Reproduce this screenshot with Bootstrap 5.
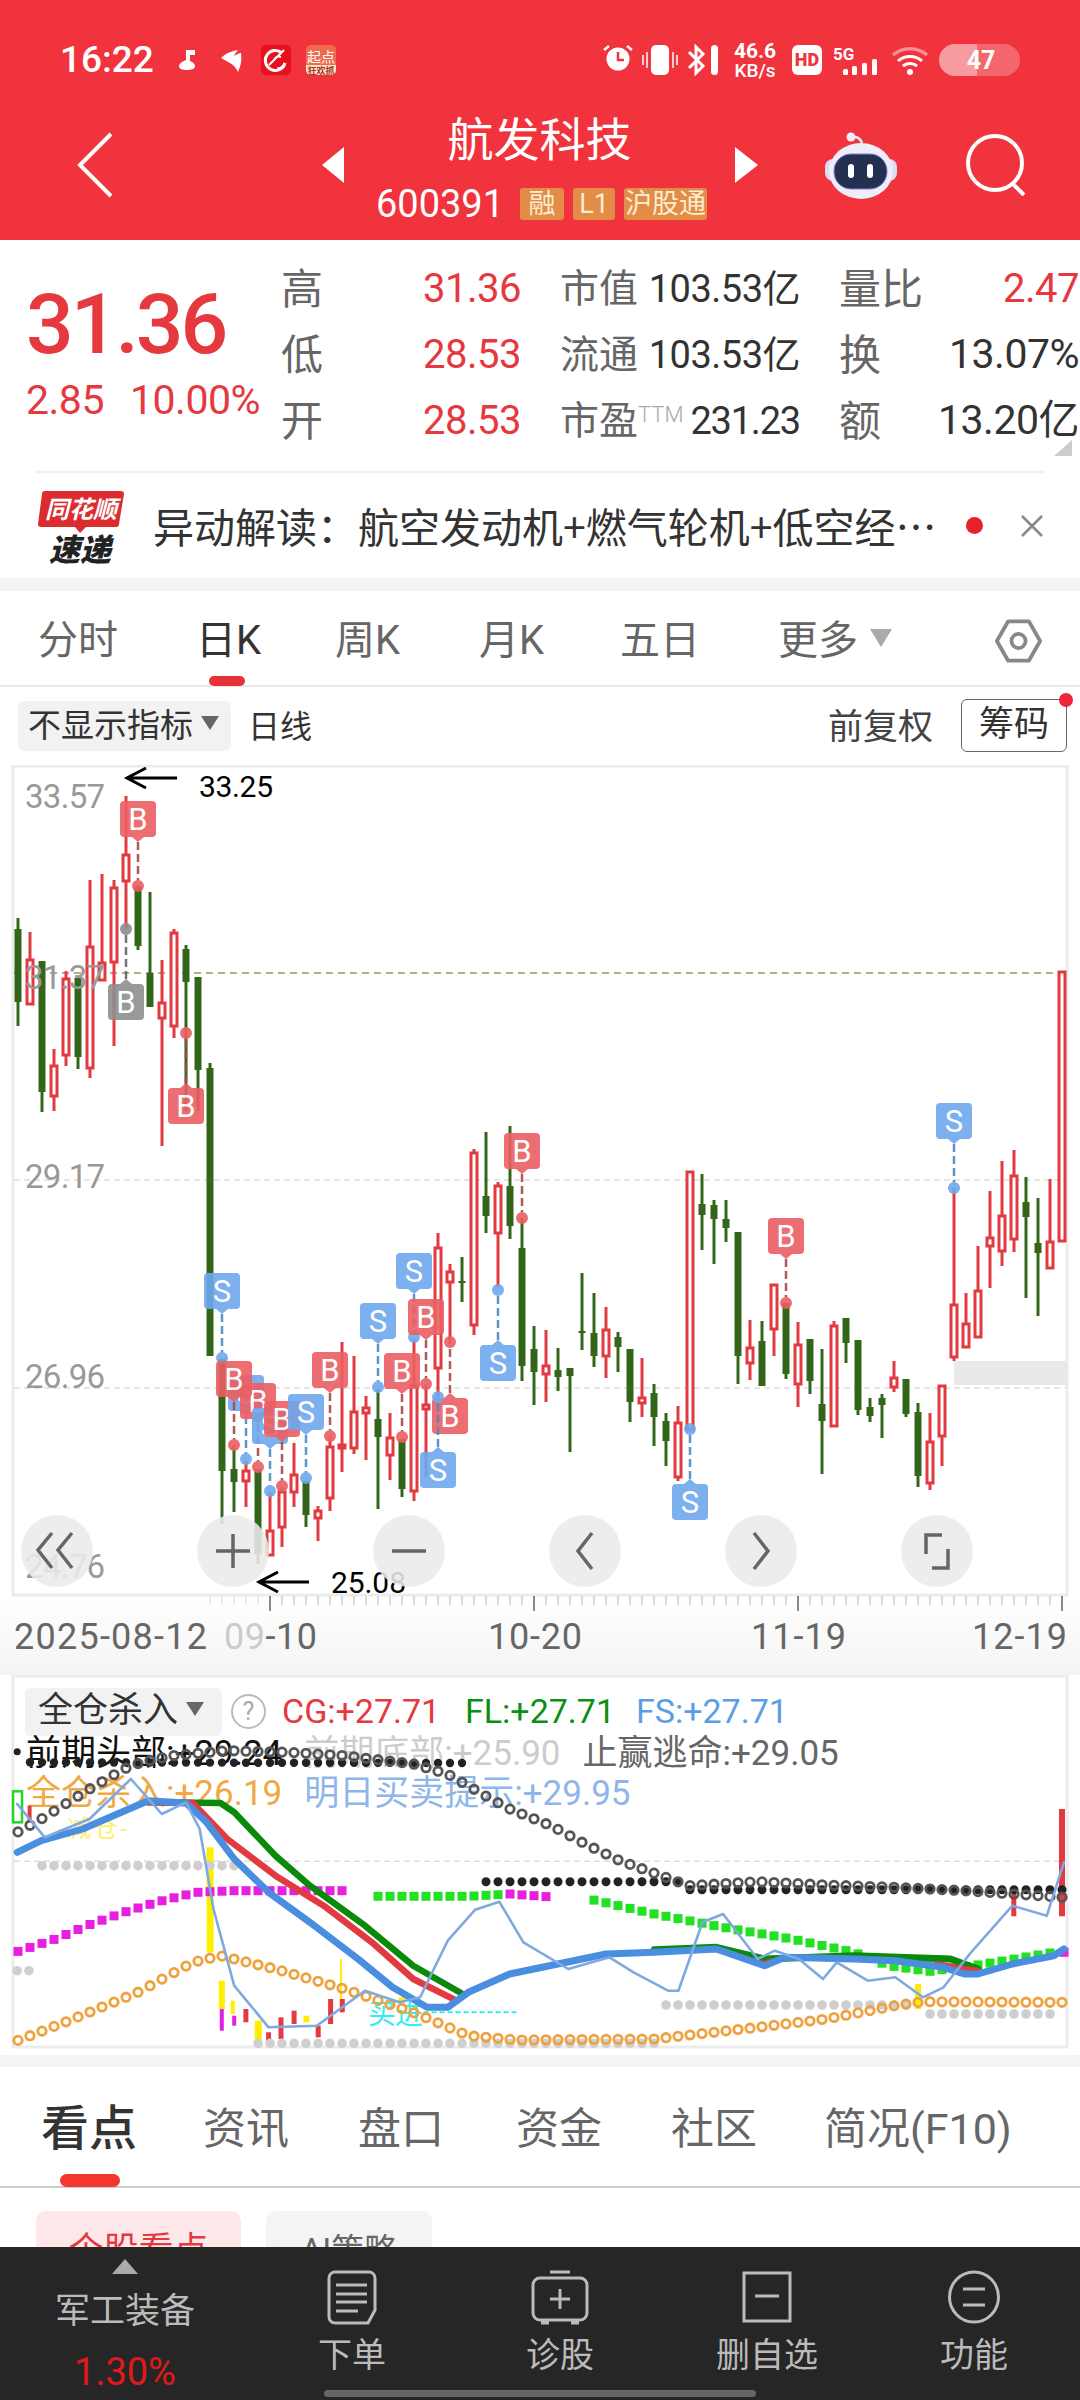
<!DOCTYPE html>
<html lang="zh-CN">
<head>
  <meta charset="UTF-8">
  <meta name="viewport" content="width=device-width, initial-scale=1.0">
  <title>航发科技</title>
  <link href="https://cdn.jsdelivr.net/npm/bootstrap@5.3.3/dist/css/bootstrap.min.css" rel="stylesheet">
  <script src="https://cdn.jsdelivr.net/npm/bootstrap@5.3.3/dist/js/bootstrap.bundle.min.js"></script>
  <style>
    body { width: 1080px; height: 2400px; overflow: hidden; background: #fff; color: #333;
      font-family: Roboto, "Noto Sans CJK SC", sans-serif; }
    .app-main { height: 2247px; overflow: hidden; }
    .app-head { height: 240px; background: #f0333d; color: #fff; }
    .status-row { height: 90px; padding: 30px 0 0 60px; }
    .status-time { font-size: 37px; font-weight: 500; width: 110px; }
    .status-right { margin-left: 260px; }
    .nav-row { height: 150px; padding-left: 77px; }
    .nav-prev { margin-left: 209px; }
    .nav-mid { width: 391px; }
    .nav-title { font-size: 46px; line-height: 70px; margin-top: 15px; height: 70px; }
    .nav-sub { margin-top: 13px; height: 32px; margin-left: 4px; }
    .nav-code { font-size: 38px; line-height: 32px; margin-right: 16px; }
    .nav-tag { background: #e28c48; color: #fbeecf; font-size: 27px; line-height: 32px; height: 32px; width: 44px; text-align: center; border-radius: 3px; margin-right: 9px; white-space: nowrap; }
    .nav-tag-l1 { width: 42px; }
    .nav-tag:last-child { margin-right: 0; width: 83px; }
    .robot-mark { margin: 0 69px 0 66px; }

    .quote-main { height: 231px; }
    .quote-left { width: 281px; padding: 43px 0 0 26px; color: #e5383f; }
    .quote-price { font-size: 84px; line-height: 84px; font-weight: 500; letter-spacing: -3px; }
    .quote-sub { font-size: 41px; line-height: 44px; margin-top: 11px; letter-spacing: -.5px; width: 234px; }
    .quote-grid { display: grid; grid-template-columns: 240px 240px 240px; column-gap: 39px; grid-auto-rows: 66px; padding-top: 16px; }
    .quote-cell { display: flex; justify-content: space-between; align-items: center; white-space: nowrap; }
    .quote-lab { font-size: 39px; color: #666; }
    .quote-big { font-size: 42px; }
    .quote-lab sup { font-size: 22px; color: #aaa; top: -.55em; font-weight: 300; }
    .quote-val { font-size: 38px; color: #333; letter-spacing: -.5px; }
    .quote-wide { font-size: 41px; }
    .quote-tight { letter-spacing: -1.2px; }
    .quote-up { color: #e5383f; font-size: 40px; }
    .corner-mark { position: absolute; left: 1054px; top: 440px; }

    .news-row { height: 107px; border-top: 2px solid #f0f0f0; margin: 0 36px; }
    .news-logo { margin: 0 25px 0 2px; }
    .news-text { font-size: 41px; color: #333; white-space: nowrap; width: 813px; font-family: "Noto Sans CJK SC", sans-serif; }
    .news-dot { width: 17px; height: 17px; background: #e8202c; border-radius: 50%; }
    .news-close { margin-left: 38px; }
    .gray-band { height: 13px; background: #f4f4f4; }
    .gray-band-low { height: 12px; }

    .kline-tabs { display: grid; grid-template-columns: 158px 139px 144px 141px 158px 217px 47px; height: 96px; padding: 5px 0 0 38px; border-bottom: 2px solid #e8e8e8; }
    .kline-tab { font-size: 40px; color: #666; position: relative; display: flex; align-items: center; white-space: nowrap; }
    .kline-on { color: #333; }
    .kline-on::after { content: ""; position: absolute; left: 13px; bottom: -1px; width: 36px; height: 10px; background: #e8323a; border-radius: 5px; }
    .tab-caret { width: 0; height: 0; border-left: 11px solid transparent; border-right: 11px solid transparent; border-top: 18px solid #aaa; margin: 0 0 6px 12px; }

    .tool-row { height: 78px; padding: 14px 13px 0 18px; }
    .tool-pill { background: #f2f2f2; border-radius: 6px; height: 50px; width: 213px; padding-left: 10px; font-size: 33px; color: #333; white-space: nowrap; }
    .tool-caret { width: 0; height: 0; border-left: 9px solid transparent; border-right: 9px solid transparent; border-top: 14px solid #666; margin: 0 0 6px 8px; }
    .tool-day { font-size: 32px; margin-left: 17px; color: #333; height: 52px; }
    .tool-adj { font-size: 35px; color: #444; margin-right: 28px; line-height: 54px; }
    .tool-btn { width: 106px; height: 53px; margin-top: -2px; border: 1.5px solid #666; border-radius: 6px; font-size: 35px; color: #333; position: relative; text-align: center; line-height: 50px; }
    .tool-dot { position: absolute; right: -7px; top: -7px; width: 14px; height: 14px; background: #f0243a; border-radius: 50%; }

    .chart-box { height: 910px; }
    .chart-svg { display: block; }
    .ind-box { height: 380px; position: relative; }
    .ind-svg { position: absolute; left: 0; top: 0; }
    .ind-top { padding: 11px 0 0 25px; }
    .ind-pill { width: 197px; height: 48px; background: #f2f2f2; border-radius: 6px; font-size: 35px; padding-left: 13px; color: #333; white-space: nowrap; }
    .ind-help { width: 35px; height: 35px; border: 2px solid #bbb; border-radius: 50%; color: #aaa; font-size: 25px; text-align: center; line-height: 31px; margin: 0 16px 0 9px; }
    .ind-leg { font-size: 34px; white-space: nowrap; }
    .leg-cg { width: 183px; color: #e5383f; }
    .leg-fl { width: 171px; color: #0a8f12; }
    .leg-fs { color: #5b9de6; }
    .ind-line { font-size: 35px; line-height: 40px; padding-left: 26px; white-space: nowrap; }
    .ind-up { margin-top: -3px; }
    .ind-line span { margin-right: 22px; }
    .leg-a { color: #111; }
    .leg-b { color: #ccc; }
    .leg-c { color: #666; }
    .leg-d { color: #f0a844; }
    .leg-e { color: #8fb6ea; }

    .info-tabs { height: 121px; display: grid; grid-template-columns: 162px 155px 158px 155px 153px 256px; padding: 5px 0 0 41px; border-bottom: 2px solid #ccc; }
    .info-tab { font-size: 43px; color: #666; position: relative; white-space: nowrap; display: flex; align-items: center; }
    .info-on { font-size: 48px; color: #333; font-weight: 500; }
    .info-on::after { content: ""; position: absolute; left: 19px; bottom: -1px; width: 60px; height: 13px; background: #f5362f; border-radius: 7px; }
    .chip-row { padding: 23px 0 0 36px; gap: 25px; }
    .info-chip { height: 80px; border-radius: 10px; display: flex; align-items: center; justify-content: center; font-size: 35px; }
    .chip-on { width: 205px; background: #fde7e9; color: #e5383f; }
    .chip-off { width: 166px; background: #f4f4f4; color: #666; font-size: 33px; }

    .bottom-bar { height: 153px; background: #262626; color: #bbb; display: grid; grid-template-columns: 250px 204px 212px 202px 212px; position: relative; }
    .bar-first { padding-top: 12px; }
    .bar-tri { width: 0; height: 0; border-left: 13px solid transparent; border-right: 13px solid transparent; border-bottom: 15px solid #aaa; }
    .bar-name { font-size: 35px; line-height: 44px; margin-top: 16px; white-space: nowrap; }
    .bar-pct { font-size: 38px; line-height: 44px; margin-top: 16px; color: #e01a1a; }
    .bar-item { padding-top: 23px; }
    .bar-lab { font-size: 34px; line-height: 44px; margin-top: 8px; white-space: nowrap; }
    .home-bar { position: absolute; left: 324px; top: 143px; width: 432px; height: 7px; background: #666; border-radius: 4px; }
  </style>
</head>
<body>
<div class="app-main">
  <div class="app-head">
    <div class="status-row d-flex align-items-center">
      <div class="status-time">16:22</div>
      <svg width="170" height="40" viewBox="170 40 170 40">
        <path d="M186 50h9v5h-5v6c3 1 5 3 5 5 0 3-4 4-8 4s-8-1-8-4c0-2 2-4 5-5l2-1z" fill="#fff"/>
        <path d="M221 58c5-5 11-7 17-8-2 2-3 4-4 6 4-2 5-3 7-3 1 7 0 12-3 19-2-4-4-7-8-9-3-2-6-3-9-5z" fill="#fff"/>
        <rect x="261" y="45" width="30" height="30" rx="5" fill="#e8101c"/>
        <path d="M282 53a10 10 0 1 0 3 10c-1 3-4 6-8 6" fill="none" stroke="#fff" stroke-width="3"/>
        <path d="M269 65l15-15M274 60c1-3 4-4 7-3" fill="none" stroke="#fff" stroke-width="2"/>
        <rect x="306" y="45" width="30" height="30" rx="5" fill="#ee6b4f"/>
        <path d="M306 65h30v5a5 5 0 0 1-5 5h-20a5 5 0 0 1-5-5z" fill="#fbe3c4"/>
        <text x="321" y="62" font-size="14" fill="#fff" text-anchor="middle">起点</text>
        <text x="321" y="74" font-size="9" fill="#a5352b" text-anchor="middle" font-weight="700">狂欢抓</text>
      </svg>
      <svg class="status-right" width="425" height="40" viewBox="600 40 425 40">
        <circle cx="618" cy="59" r="11.5" fill="#fff"/>
        <path d="M618 52v8h6" fill="none" stroke="#f0333d" stroke-width="2.5"/>
        <path d="M604 50l5-4M632 50l-5-4" stroke="#fff" stroke-width="2.5"/>
        <rect x="651" y="45" width="18" height="30" rx="5" fill="#fff"/>
        <path d="M643 55v10M647 52v16M673 52v16M677 55v10" stroke="#fff" stroke-width="1.5"/>
        <path d="M689 52l14 14-7 7V47l7 7-14 14" fill="none" stroke="#fff" stroke-width="3"/>
        <rect x="711" y="45" width="7" height="30" rx="3.5" fill="#fff"/>
        <text x="755" y="58" font-size="21" font-weight="700" fill="#fff" text-anchor="middle">46.6</text>
        <text x="755" y="77" font-size="19" font-weight="500" fill="#fff" text-anchor="middle">KB/s</text>
        <rect x="792" y="45" width="30" height="30" rx="6" fill="#fff"/>
        <text x="807" y="66" font-size="18" font-weight="900" fill="#f0333d" text-anchor="middle">HD</text>
        <text x="833" y="60" font-size="17" font-weight="700" fill="#fff">5G</text>
        <rect x="843" y="69" width="5" height="6" rx="1.5" fill="#fff"/>
        <rect x="852" y="66" width="5" height="9" rx="1.5" fill="#fff"/>
        <rect x="862" y="63" width="5" height="12" rx="1.5" fill="#fff"/>
        <rect x="872" y="59" width="5" height="16" rx="1.5" fill="#fff"/>
        <path d="M893 55a26 26 0 0 1 34 0" fill="none" stroke="#fff" stroke-opacity=".45" stroke-width="3.5"/>
        <path d="M898 61a18 18 0 0 1 24 0M903 66a11 11 0 0 1 14 0" fill="none" stroke="#fff" stroke-width="3"/>
        <circle cx="910" cy="72" r="3" fill="#fff"/>
        <rect x="939" y="44" width="81" height="32" rx="16" fill="#fff" fill-opacity=".25"/>
        <path d="M955 44h22v32h-22a16 16 0 0 1 0-32z" fill="#fff" fill-opacity=".35"/>
        <text x="981" y="69" font-size="25" font-weight="700" fill="#fff" text-anchor="middle">47</text>
      </svg>
    </div>
    <div class="nav-row d-flex align-items-center">
      <svg width="36" height="66" viewBox="0 0 36 66" fill="none" stroke="#fff" stroke-width="4"><path d="M34 2L3 33l31 31"/></svg>
      <svg class="nav-prev" width="22" height="36" viewBox="0 0 22 36"><path d="M22 0v36L0 18z" fill="#fff"/></svg>
      <div class="nav-mid d-flex flex-column align-items-center align-self-start">
        <div class="nav-title">航发科技</div>
        <div class="nav-sub d-flex">
          <div class="nav-code">600391</div>
          <div class="nav-tag">融</div>
          <div class="nav-tag nav-tag-l1">L1</div>
          <div class="nav-tag">沪股通</div>
        </div>
      </div>
      <svg width="23" height="36" viewBox="0 0 23 36"><path d="M0 0v36l23-18z" fill="#fff"/></svg>
      <svg class="robot-mark" width="73" height="68" viewBox="824 130 73 68">
        <path d="M851 137c4-2 9-1 11 5" fill="none" stroke="#e8e6f4" stroke-width="2.5"/>
        <circle cx="851" cy="136" r="4.5" fill="#f0eef8"/>
        <rect x="825" y="158" width="72" height="22" rx="8" fill="#dcdcf2"/>
        <ellipse cx="861" cy="170" rx="32" ry="28" fill="#eeeef9"/>
        <rect x="834" y="153" width="53" height="35" rx="17" fill="#23304f" stroke="#8a7ad8" stroke-width="1"/>
        <rect x="848" y="163" width="6" height="14" rx="3" fill="#fff"/>
        <rect x="867" y="163" width="6" height="14" rx="3" fill="#fff"/>
      </svg>
      <svg width="60" height="62" viewBox="966 136 60 62" fill="none" stroke="#fff" stroke-width="4"><circle cx="995" cy="165" r="27"/><path d="M1013 186l11 11"/></svg>
    </div>
  </div>

  <div class="quote-main d-flex">
    <div class="quote-left">
      <div class="quote-price">31.36</div>
      <div class="quote-sub d-flex justify-content-between"><span>2.85</span><span>10.00%</span></div>
    </div>
    <div class="quote-grid">
      <div class="quote-cell"><span class="quote-lab quote-big">高</span><span class="quote-val quote-up">31.36</span></div>
      <div class="quote-cell"><span class="quote-lab">市值</span><span class="quote-val">103.53亿</span></div>
      <div class="quote-cell"><span class="quote-lab quote-big">量比</span><span class="quote-val quote-up">2.47</span></div>
      <div class="quote-cell"><span class="quote-lab quote-big">低</span><span class="quote-val quote-up">28.53</span></div>
      <div class="quote-cell"><span class="quote-lab">流通</span><span class="quote-val">103.53亿</span></div>
      <div class="quote-cell"><span class="quote-lab quote-big">换</span><span class="quote-val quote-wide">13.07%</span></div>
      <div class="quote-cell"><span class="quote-lab quote-big">开</span><span class="quote-val quote-up">28.53</span></div>
      <div class="quote-cell"><span class="quote-lab">市盈<sup>TTM</sup></span><span class="quote-val quote-tight">231.23</span></div>
      <div class="quote-cell"><span class="quote-lab quote-big">额</span><span class="quote-val quote-wide">13.20亿</span></div>
    </div>
    <svg class="corner-mark" width="18" height="16" viewBox="0 0 18 16"><path d="M18 0v16H0z" fill="#ccc"/></svg>
  </div>
  <div class="news-row d-flex align-items-center">
    <svg class="news-logo" width="90" height="76" viewBox="38 486 90 76">
      <path d="M45 489h76a3 3 0 0 1 3 3l-5 30a3 3 0 0 1-3 3H86l-6 6-5-6H41a3 3 0 0 1-3-3l4-30a3 3 0 0 1 3-3z" fill="#dd2c30"/>
      <text x="81" y="516" font-size="24" font-weight="700" font-style="italic" fill="#fff" text-anchor="middle">同花顺</text>
      <text x="80" y="559" font-size="31" font-weight="900" font-style="italic" fill="#222" text-anchor="middle">速递</text>
    </svg>
    <div class="news-text">异动解读：航空发动机+燃气轮机+低空经…</div>
    <div class="news-dot"></div>
    <svg class="news-close" width="22" height="22" viewBox="0 0 22 22" stroke="#888" stroke-width="2.5"><path d="M1 1l20 20M21 1L1 21"/></svg>
  </div>
  <div class="gray-band"></div>

  <div class="kline-tabs">
    <div class="kline-tab">分时</div>
    <div class="kline-tab kline-on">日K</div>
    <div class="kline-tab">周K</div>
    <div class="kline-tab">月K</div>
    <div class="kline-tab">五日</div>
    <div class="kline-tab">更多<span class="tab-caret"></span></div>
    <div class="kline-tab"><svg width="50" height="48" viewBox="0 0 50 48" fill="none" stroke="#888" stroke-width="4"><path d="M14 3h22l12 21-12 21H14L2 24z" stroke-linejoin="round"/><circle cx="25" cy="24" r="7.5"/></svg></div>
  </div>
  <div class="tool-row d-flex align-items-start">
    <div class="tool-pill d-flex align-items-center">不显示指标<span class="tool-caret"></span></div>
    <div class="tool-day d-flex align-items-center">日线</div>
    <div class="tool-adj ms-auto">前复权</div>
    <div class="tool-btn">筹码<span class="tool-dot"></span></div>
  </div>

  <div class="chart-box"><svg id="priceChart" class="chart-svg" width="1080" height="910" viewBox="0 766 1080 910"></svg></div>

  <div class="ind-box">
    <div class="ind-top d-flex align-items-center">
      <div class="ind-pill d-flex align-items-center">全仓杀入<span class="tool-caret"></span></div>
      <div class="ind-help">?</div>
      <div class="ind-leg leg-cg">CG:+27.71</div>
      <div class="ind-leg leg-fl">FL:+27.71</div>
      <div class="ind-leg leg-fs">FS:+27.71</div>
    </div>
    <div class="ind-line ind-up"><span class="leg-a">前期头部:+29.24</span><span class="leg-b">前期底部:+25.90</span><span class="leg-c">止赢逃命:+29.05</span></div>
    <div class="ind-line"><span class="leg-d">全仓杀入:+26.19</span><span class="leg-e">明日买卖提示:+29.95</span></div>
    <svg id="indChart" class="ind-svg" width="1080" height="380" viewBox="0 1676 1080 380"></svg>
  </div>
  <div class="gray-band gray-band-low"></div>

  <div class="info-tabs">
    <div class="info-tab info-on">看点</div>
    <div class="info-tab">资讯</div>
    <div class="info-tab">盘口</div>
    <div class="info-tab">资金</div>
    <div class="info-tab">社区</div>
    <div class="info-tab">简况(F10)</div>
  </div>
  <div class="chip-row d-flex">
    <div class="info-chip chip-on">个股看点</div>
    <div class="info-chip chip-off">AI策略</div>
  </div>
</div>

<div class="bottom-bar">
  <div class="bar-first d-flex flex-column align-items-center">
    <div class="bar-tri"></div>
    <div class="bar-name">军工装备</div>
    <div class="bar-pct">1.30%</div>
  </div>
  <div class="bar-item d-flex flex-column align-items-center">
    <svg width="50" height="55" viewBox="0 0 50 55" fill="none" stroke="#bbb" stroke-width="3"><path d="M8 2h34a6 6 0 0 1 6 6v32l-7 13H8a6 6 0 0 1-6-6V8a6 6 0 0 1 6-6z"/><path d="M9 15h31M9 24h31M9 32h31M9 41h22"/></svg>
    <div class="bar-lab">下单</div>
  </div>
  <div class="bar-item d-flex flex-column align-items-center">
    <svg width="58" height="55" viewBox="0 0 58 55" fill="none" stroke="#bbb" stroke-width="3"><path d="M19 2h20M9 8h40a7 7 0 0 1 7 7v28a7 7 0 0 1-7 7H9a7 7 0 0 1-7-7V15a7 7 0 0 1 7-7z"/><path d="M29 19v20M19 29h20"/><path d="M10 52h8M40 52h8" stroke-width="5"/></svg>
    <div class="bar-lab">诊股</div>
  </div>
  <div class="bar-item d-flex flex-column align-items-center">
    <svg width="50" height="55" viewBox="0 0 50 55" fill="none" stroke="#bbb" stroke-width="3"><path d="M2 3h46v48H2z"/><path d="M13 26h24"/></svg>
    <div class="bar-lab">删自选</div>
  </div>
  <div class="bar-item d-flex flex-column align-items-center">
    <svg width="54" height="55" viewBox="0 0 54 55" fill="none" stroke="#bbb" stroke-width="3"><ellipse cx="27" cy="27" rx="24.5" ry="25"/><path d="M16 19h22M16 35h22"/></svg>
    <div class="bar-lab">功能</div>
  </div>
  <div class="home-bar"></div>
</div>

<script>
  'use strict';
  const RED = '#e23a40', GREEN = '#33661a';

  // r/g, wick top, body top, body bottom, wick bottom (x = 18 + 12 * index)
  const candles = [
    ['g',919,930,1003,1027],['r',933,961,1005,1006],['g',962,962,1093,1113],['r',1050,1067,1097,1112],
    ['r',972,980,1056,1067],['g',979,979,1058,1070],['r',881,948,1069,1079],['r',875,964,981,982],
    ['r',881,889,963,1047],['r',797,856,882,930],['g',887,887,947,951],['g',893,974,1008,1008],
    ['r',961,1004,1019,1147],['r',930,934,1027,1039],['g',946,950,983,1112],['g',978,978,1071,1112],
    ['g',1064,1069,1357,1357],['g',1360,1360,1472,1525],['g',1446,1470,1483,1513],['r',1462,1472,1482,1508],
    ['g',1470,1470,1555,1565],['r',1493,1532,1556,1556],['r',1488,1493,1528,1548],['r',1444,1476,1493,1508],
    ['g',1482,1482,1516,1528],['r',1507,1512,1519,1542],['r',1437,1448,1499,1512],['r',1343,1446,1449,1473],
    ['r',1357,1413,1449,1455],['r',1397,1409,1414,1461],['g',1390,1420,1438,1510],['r',1414,1439,1456,1481],
    ['g',1440,1440,1490,1498],['r',1340,1387,1492,1502],['r',1385,1406,1410,1477],['r',1234,1249,1369,1398],
    ['r',1265,1273,1283,1345],['g',1258,1282,1284,1303],['r',1150,1154,1326,1336],['g',1133,1197,1217,1234],
    ['r',1183,1187,1234,1288],['g',1127,1187,1227,1240],['g',1219,1249,1367,1382],['g',1327,1350,1373,1406],
    ['r',1331,1367,1375,1403],['g',1349,1371,1378,1392],['g',1369,1369,1377,1453],['g',1274,1332,1334,1351],
    ['g',1294,1334,1357,1368],['r',1308,1331,1357,1379],['g',1333,1338,1348,1373],['g',1350,1350,1403,1423],
    ['r',1359,1399,1404,1418],['g',1385,1394,1418,1447],['g',1414,1422,1442,1467],['r',1407,1424,1478,1482],
    ['r',1173,1173,1431,1431],['g',1175,1205,1216,1251],['g',1201,1206,1220,1265],['g',1201,1220,1229,1243],
    ['g',1233,1233,1357,1385],['r',1321,1349,1364,1381],['g',1322,1342,1387,1387],['r',1286,1286,1330,1357],
    ['g',1304,1304,1375,1380],['r',1323,1346,1385,1408],['g',1340,1340,1382,1395],['g',1350,1405,1422,1475],
    ['r',1322,1327,1427,1427],['g',1319,1319,1344,1364],['g',1341,1341,1411,1416],['g',1399,1408,1417,1423],
    ['g',1395,1399,1406,1439],['r',1362,1379,1388,1393],['g',1380,1380,1415,1418],['g',1404,1413,1477,1488],
    ['r',1414,1443,1484,1491],['r',1387,1387,1437,1467],['r',1189,1306,1358,1362],['r',1294,1325,1348,1348],
    ['r',1247,1292,1338,1338],['r',1192,1239,1247,1289],['r',1162,1217,1252,1267],['r',1151,1177,1240,1253],
    ['g',1178,1203,1218,1299],['g',1199,1244,1254,1317],['r',1180,1243,1269,1270],['r',973,973,1242,1242]
  ];

  // letter, x, badge top, dot y, points down (badge above the dot)
  const badges = [
    ['B',138,802,887,true],['G',126,985,930,false],['B',186,1089,1034,false],
    ['S',222,1274,1359,true],['S',246,1376,1460,true],['B',258,1384,1468,true],['S',270,1409,1492,true],
    ['B',282,1402,1487,true],['B',234,1362,1446,true],['S',306,1395,1479,true],['B',330,1353,1437,true],
    ['S',378,1304,1388,true],['B',402,1354,1438,true],['S',414,1254,1338,true],['B',426,1300,1385,true],
    ['B',450,1399,1343,false],['S',438,1453,1398,false],['S',498,1346,1291,false],['B',522,1134,1219,true],
    ['S',690,1485,1430,false],['B',786,1219,1304,true],['S',954,1104,1189,true]
  ];

  function tag(name, attrs, text) {
    const list = Object.keys(attrs).map(k => k + '="' + attrs[k] + '"').join(' ');
    return '<' + name + ' ' + list + (text === undefined ? '/>' : '>' + text + '</' + name + '>');
  }
  const line = (x1, y1, x2, y2, stroke, w, dash) => tag('line', Object.assign({x1, y1, x2, y2, stroke, 'stroke-width': w}, dash ? {'stroke-dasharray': dash} : {}));
  const rect = (x, y, width, height, fill, extra) => tag('rect', Object.assign({x, y, width, height, fill}, extra || {}));

  function drawPrice() {
    let s = '';
    s += '<defs><linearGradient id="fadeBg" x1="0" y1="0" x2="0" y2="1"><stop offset="0" stop-color="#fff"/><stop offset="1" stop-color="#f4f4f4"/></linearGradient></defs>';
    s += rect(0, 1597, 1080, 79, 'url(#fadeBg)');
    s += rect(13, 767, 1054, 829, '#fff', {stroke: '#ececec', 'stroke-width': 3});
    s += line(14, 1181, 1065, 1181, '#ddd', 1.5, '6 4');
    s += line(14, 1389, 1065, 1389, '#ddd', 1.5, '6 4');
    s += rect(954, 1362, 113, 24, '#e9e9e9');
    s += line(14, 974, 1058, 974, '#b8ad85', 2, '7 5');

    candles.forEach((c, i) => {
      const x = 18 + 12 * i;
      const col = c[0] === 'r' ? RED : GREEN;
      s += line(x, c[1], x, c[4], col, 3);
      if (c[0] === 'r') s += rect(x - 3, c[2], 6, Math.max(c[3] - c[2], 3), '#fff', {stroke: col, 'stroke-width': 3});
      else s += rect(x - 3.5, c[2], 7, Math.max(c[3] - c[2], 2), col);
    });

    [['33.57', 797], ['31.37', 978], ['29.17', 1177], ['26.96', 1377], ['24.76', 1567]].forEach(l => {
      s += tag('text', {x: 25, y: l[1] + 12, 'font-size': 33, fill: '#999', textLength: 80}, l[0]);
    });

    // arrows for the highest and lowest price
    s += tag('path', {d: 'M177 779H128M146 769l-19 10 19 10M309 1583H260M278 1573l-19 10 19 10', fill: 'none', stroke: '#000', 'stroke-width': 3});
    s += tag('text', {x: 199, y: 798, 'font-size': 30, fill: '#000', textLength: 74}, '33.25');
    s += tag('text', {x: 331, y: 1594, 'font-size': 30, fill: '#000', textLength: 75}, '25.08');

    badges.forEach(b => {
      const isB = b[0] === 'B', isG = b[0] === 'G';
      const bg = isG ? '#8e8e8e' : isB ? '#ec5f63' : '#6ea8ee';
      const dash = isG ? '#666' : isB ? '#a8474c' : '#4a8ac4';
      const x = b[1], top = b[2], dot = b[3], down = b[4];
      const tip = down ? top + 41 : top - 5;
      const edge = down ? top + 36 : top;
      let g = line(x, tip, x, dot, dash, 2.5, '8 4');
      g += tag('circle', {cx: x, cy: dot, r: 6, fill: bg});
      g += rect(x - 18, top, 36, 36, bg, {rx: 4});
      g += tag('path', {d: 'M' + (x - 6) + ' ' + edge + 'L' + x + ' ' + tip + 'L' + (x + 6) + ' ' + edge + 'z', fill: bg});
      g += tag('text', {x, y: top + 29, 'font-size': 31, fill: '#fff', 'text-anchor': 'middle'}, isG ? 'B' : b[0]);
      s += tag('g', {opacity: .9}, g);
    });

    // round buttons over the chart
    [57, 233, 409, 585, 761, 937].forEach(x => { s += tag('circle', {cx: x, cy: 1552, r: 36, fill: '#ebebeb', 'fill-opacity': .88}); });
    s += tag('path', {d: 'M52 1534l-14 17 14 18M72 1534l-14 17 14 18M216 1552h34M233 1535v34M392 1552h34M592 1534l-14 18 14 18M754 1534l14 18-14 18M926 1555v-19h16M948 1550v19h-16',
      fill: 'none', stroke: '#666', 'stroke-width': 3.5});

    // axis ticks
    for (let x = 210; x <= 1066; x += 12) {
      const major = (x - 270) % 264 === 0;
      s += line(x, 1597, x, major ? 1612 : 1606, major ? '#888' : x < 270 ? '#e6e6e6' : '#ccc', major ? 2 : 1.5);
    }
    s += tag('text', {x: 14, y: 1650, 'font-size': 36, fill: '#666', textLength: 193}, '2025-08-12');
    s += tag('text', {x: 224, y: 1650, 'font-size': 36, fill: '#666', textLength: 93}, '<tspan fill="#ccc">09</tspan>-10');
    s += tag('text', {x: 488, y: 1650, 'font-size': 36, fill: '#666', textLength: 94}, '10-20');
    s += tag('text', {x: 751, y: 1650, 'font-size': 36, fill: '#666', textLength: 95}, '11-19');
    s += tag('text', {x: 972, y: 1650, 'font-size': 36, fill: '#666', textLength: 95}, '12-19');
    document.getElementById('priceChart').innerHTML = s;
  }

  // indicator points were read off a crop: x / 1.452, 1660 + y / 3
  const zx = v => v / 1.452, zy = v => 1660 + v / 3;
  const smooth = pts => pts.map(p => zx(p[0]).toFixed(1) + ',' + zy(p[1]).toFixed(1)).join(' ');

  function dotsOn(pts, from, to) {
    const out = [];
    for (let i = 0; i < 90; i++) {
      const x = 18 + 12 * i;
      if (x < zx(from) - 1 || x > zx(to) + 1) continue;
      const zv = x * 1.452;
      let y = pts[pts.length - 1][1];
      for (let k = 1; k < pts.length; k++) {
        if (zv <= pts[k][0]) {
          const a = pts[k - 1], b = pts[k];
          y = a[1] + (b[1] - a[1]) * Math.max(zv - a[0], 0) / (b[0] - a[0]);
          break;
        }
      }
      out.push([x, zy(y)]);
    }
    return out;
  }
  const poly = (pts, stroke, w) => tag('polyline', {points: smooth(pts), fill: 'none', stroke, 'stroke-width': w, 'stroke-linejoin': 'round', 'stroke-linecap': 'round'});
  const ring = (p, col) => tag('circle', {cx: p[0], cy: p[1].toFixed(1), r: 4.2, fill: 'none', stroke: col, 'stroke-width': 2.8});
  const solid = (p, col, r) => tag('circle', {cx: p[0], cy: p[1].toFixed(1), r, fill: col});
  const square = (p, col) => rect(p[0] - 4.5, (p[1] - 4.5).toFixed(1), 9, 9, col);
  const bar = (zxv, y1, y2, col, w) => line(zx(zxv).toFixed(1), zy(y1).toFixed(1), zx(zxv).toFixed(1), zy(y2).toFixed(1), col, w);

  function drawInd() {
    let s = '';
    s += rect(13, 1677, 1054, 371, 'none', {stroke: '#ececec', 'stroke-width': 3});
    s += line(14, zy(607), 1065, zy(607), '#ddd', 1.5, '6 4');

    // small bars at the bottom and the yellow signals
    s += bar(305, 565, 880, '#ffee00', 7) + bar(322, 965, 1050, '#ffee00', 6) + bar(338, 1025, 1065, '#ffee00', 4) + bar(375, 1085, 1150, '#ffee00', 7) + bar(445, 1070, 1090, '#ffee00', 6) + bar(495, 900, 1060, '#ffee00', 2) + bar(583, 1015, 1040, '#ffee00', 6) + bar(1333, 975, 1050, '#ffee00', 6);
    s += bar(322, 1050, 1115, '#e020e0', 4) + bar(340, 1070, 1100, '#e020e0', 4) + bar(357, 1050, 1090, RED, 5);
    [[390,1120,1155],[408,1075,1140],[427,1055,1095],[462,1100,1135],[480,1020,1095],[497,1020,1060],[1472,705,772]].forEach(b => { s += bar(b[0], b[1], b[2], RED, 5); });
    s += bar(1542, 450, 772, RED, 6);
    s += rect(13, zy(397), 9, 31, 'none', {stroke: '#22d822', 'stroke-width': 2.5});
    s += bar(43, 440, 490, RED, 4);
    s += tag('text', {x: 58, y: zy(535), 'font-size': 24, fill: '#ffee66', textLength: 69}, '-减仓-');
    s += tag('text', {x: 368, y: zy(1095), 'font-size': 28, fill: '#33eef0', textLength: 55}, '买进');
    s += tag('line', {x1: zx(615), y1: zy(1060), x2: zx(750), y2: zy(1060), stroke: '#33eef0', 'stroke-width': 2, 'stroke-dasharray': '5 3'});

    // dot series
    dotsOn([[60,620],[355,620]], 60, 355).forEach(p => { s += solid(p, '#cfcfcf', 4.8); });
    [25, 42].forEach(v => { s += solid([zx(v), zy(935)], '#cfcfcf', 4.8); });
    dotsOn([[968,1038],[1330,1038]], 968, 1330).forEach(p => { s += solid(p, '#cfcfcf', 4.8); });
    dotsOn([[1335,1065],[1540,1065]], 1335, 1540).forEach(p => { s += solid(p, '#cfcfcf', 4.8); });
    dotsOn([[375,1153],[950,1153]], 375, 950).forEach(p => { s += solid(p, '#cfcfcf', 4.8); });

    const orange = [[25,1145],[100,1085],[200,1000],[280,910],[320,890],[400,930],[500,990],[600,1060],[680,1130],[750,1143],[950,1140],[1100,1105],[1200,1080],[1300,1040],[1340,1028],[1545,1030]];
    dotsOn(orange, 20, 1550).forEach(p => { s += ring(p, '#eea23e'); });
    const magenta = [[25,878],[80,840],[130,797],[180,760],[230,728],[285,700],[340,695],[400,695],[505,695]];
    dotsOn(magenta, 20, 505).forEach(p => { s += square(p, '#e81ee0'); });
    dotsOn([[547,712],[680,712],[740,705],[795,713]], 547, 730).forEach(p => { s += square(p, '#22e022'); });
    dotsOn([[547,712],[680,712],[740,705],[795,713]], 735, 800).forEach(p => { s += square(p, '#e81ee0'); });
    dotsOn([[860,722],[950,765],[1050,805],[1150,840],[1240,880],[1290,920],[1350,937],[1430,915],[1530,880]], 860, 1525).forEach(p => { s += square(p, '#22e022'); });
    s += square([zx(1545), zy(880)], '#e81ee0');

    s += solid([zx(25), zy(278)], '#222', 3.5);
    dotsOn([[40,310],[670,312]], 40, 670).forEach(p => { s += solid(p, '#222', 4.2); });
    dotsOn([[690,668],[985,668]], 690, 985).forEach(p => { s += solid(p, '#222', 4.5); });
    dotsOn([[1000,692],[1545,692]], 1000, 1545).forEach(p => { s += solid(p, '#222', 4.5); });
    const ringGray = [[25,520],[60,480],[95,435],[130,390],[180,330],[205,310],[250,290],[330,275],[420,280],[500,290],[600,315],[650,345],[700,405],[740,450],[800,500],[850,555],[900,605],[960,650],[1000,680],[1100,668],[1200,678],[1300,685],[1400,695],[1545,715]];
    dotsOn(ringGray, 20, 1550).forEach(p => { s += ring(p, '#555'); });

    // main lines
    s += poly([[950,872],[1040,865],[1110,900],[1240,890],[1380,900],[1420,930]], '#0a8a0a', 7);
    s += poly([[1070,890],[1105,915],[1125,905]], RED, 6);
    s += poly([[1360,915],[1400,930],[1420,935]], RED, 6);
    s += poly([[215,430],[320,432],[340,460],[400,590],[450,680],[530,800],[600,920],[670,1003]], '#0a8a0a', 6.5);
    s += poly([[215,430],[280,432],[330,540],[400,650],[470,740],[540,850],[600,960],[660,1022]], RED, 6.5);
    s += poly([[25,580],[60,545],[120,510],[215,425],[270,432],[300,490],[340,600],[390,700],[450,790],[520,900],[570,985],[620,1045],[650,1045],[680,1000],[740,945],[810,915],[880,885],[950,880],[1040,870],[1110,920],[1140,895],[1240,900],[1300,905],[1370,925],[1400,945],[1420,945],[1470,915],[1530,890],[1545,870]], '#4a8ee0', 7);
    s += poly([[25,435],[65,535],[130,480],[190,360],[235,465],[270,430],[290,510],[310,750],[340,980],[390,1105],[460,1100],[530,995],[580,1030],[610,1015],[650,845],[690,752],[725,728],[760,850],[825,930],[885,895],[920,940],[970,995],[985,995],[1020,790],[1050,765],[1100,900],[1125,875],[1160,900],[1195,960],[1215,910],[1260,965],[1300,955],[1340,1015],[1370,985],[1410,880],[1470,740],[1520,770],[1545,610]], '#7fa9e0', 2.6);
    document.getElementById('indChart').innerHTML = s;
  }

  drawPrice();
  drawInd();
</script>
</body>
</html>
